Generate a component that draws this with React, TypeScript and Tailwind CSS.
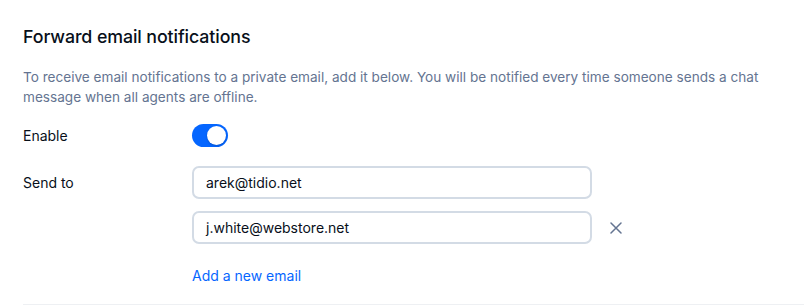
import React from "react";

export default function App() {
  const font = { fontFamily: "Inter, 'Noto Sans', sans-serif" };
  return (
    <div className="w-[804px] h-[305px] bg-white overflow-hidden" style={font}>
      <div className="pl-[23px] pt-[26px]">
        <h2 className="text-[17.8px] leading-[22px] font-medium text-[#080f1a] tracking-[-0.1px]">
          Forward email notifications
        </h2>
        <p className="mt-[19px] text-[13.6px] leading-[20px] text-[#647491] pr-[20px]">
          To receive email notifications to a private email, add it below. You will be notified every time someone sends a chat message when all agents are offline.
        </p>
        <div className="mt-[17px] flex items-center">
          <div className="w-[169px] text-[14px] text-[#080f1a]">Enable</div>
          <button className="w-[36px] h-[23px] rounded-full bg-[#0566ff] flex items-center justify-end px-[2px]">
            <span className="w-[19px] h-[19px] rounded-full bg-white shadow-[0_1px_2px_rgba(0,0,0,0.2)]" />
          </button>
        </div>
        <div className="mt-[19px] flex">
          <div className="w-[169px] h-[33px] flex items-center text-[14px] text-[#080f1a]">Send to</div>
          <div className="flex flex-col">
            <div className="flex items-center">
              <div className="w-[400px] h-[33px] rounded-[7px] border-2 border-[#d3dbe5] flex items-center px-[12px] text-[14px] text-[#080f1a]">
                arek@tidio.net
              </div>
            </div>
            <div className="mt-[12px] flex items-center">
              <div className="w-[400px] h-[33px] rounded-[7px] border-2 border-[#d3dbe5] flex items-center px-[12px] text-[14px] text-[#080f1a]">
                j.white@webstore.net
              </div>
              <svg className="ml-[18px]" width="12" height="12" viewBox="0 0 12 12" fill="none" stroke="#647491" strokeWidth="1.5" strokeLinecap="round">
                <path d="M1 1L11 11M11 1L1 11" />
              </svg>
            </div>
            <a className="mt-[22px] text-[14px] text-[#0566ff] leading-[20px]">Add a new email</a>
          </div>
        </div>
        <div className="mt-[18px] h-px bg-[#eef0f3]" />
      </div>
    </div>
  );
}
